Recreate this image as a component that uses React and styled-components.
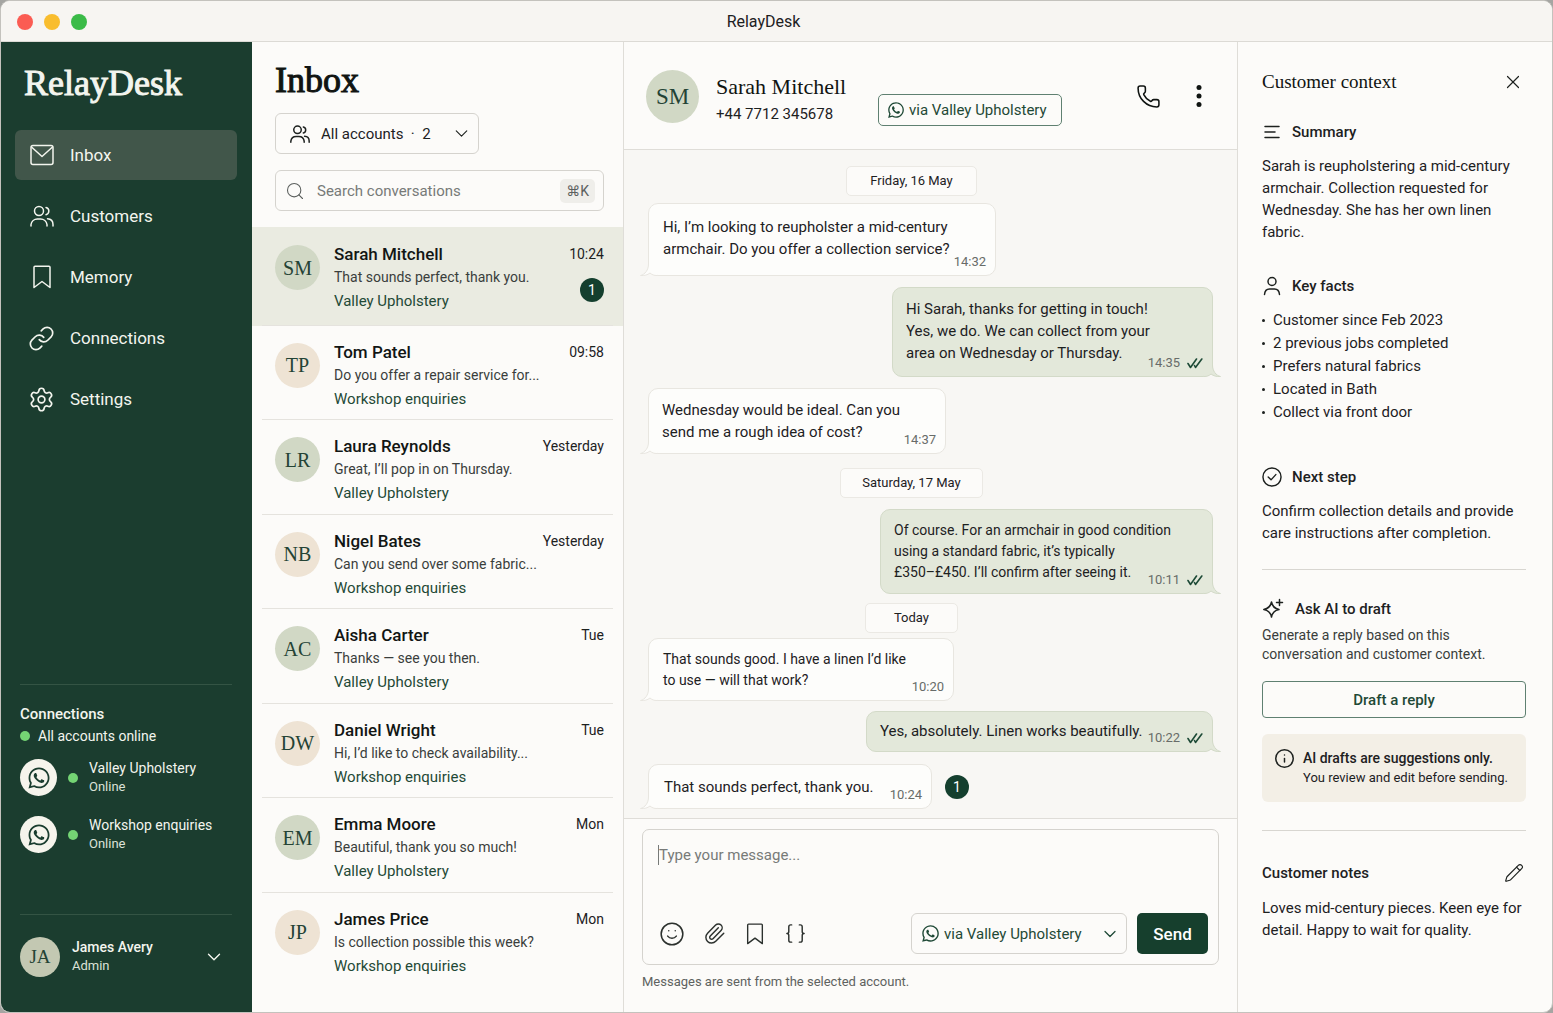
import styled, { createGlobalStyle } from "styled-components";
import { FaWhatsapp } from "react-icons/fa";
import {
  Braces,
  ChevronDown,
  Info,
  Link,
  Paperclip,
  Pencil,
  Phone,
  Search,
  Settings,
  Smile,
  X,
} from "lucide-react";

const nav = [
  { label: "Inbox", icon: MailIcon, size: 24, active: true },
  { label: "Customers", icon: PeopleIcon, size: 24 },
  { label: "Memory", icon: BookmarkIcon, size: 24 },
  { label: "Connections", icon: Link, size: 27 },
  { label: "Settings", icon: Settings, size: 27 },
];

const accounts = ["Valley Upholstery", "Workshop enquiries"];

const conversations = [
  { initials: "SM", name: "Sarah Mitchell", time: "10:24", preview: "That sounds perfect, thank you.", account: 0, unread: 1 },
  { initials: "TP", name: "Tom Patel", time: "09:58", preview: "Do you offer a repair service for...", account: 1 },
  { initials: "LR", name: "Laura Reynolds", time: "Yesterday", preview: "Great, I’ll pop in on Thursday.", account: 0 },
  { initials: "NB", name: "Nigel Bates", time: "Yesterday", preview: "Can you send over some fabric...", account: 1 },
  { initials: "AC", name: "Aisha Carter", time: "Tue", preview: "Thanks — see you then.", account: 0 },
  { initials: "DW", name: "Daniel Wright", time: "Tue", preview: "Hi, I’d like to check availability...", account: 1 },
  { initials: "EM", name: "Emma Moore", time: "Mon", preview: "Beautiful, thank you so much!", account: 0 },
  { initials: "JP", name: "James Price", time: "Mon", preview: "Is collection possible this week?", account: 1 },
];

const thread = [
  { day: "Friday, 16 May", gap: 0, width: 131 },
  { text: "Hi, I’m looking to reupholster a mid-century\narmchair. Do you offer a collection service?", time: "14:32", gap: 7, width: 348, pad: "12px 14px 15px", line: 22 },
  { sent: true, text: "Hi Sarah, thanks for getting in touch!\nYes, we do. We can collect from your\narea on Wednesday or Thursday.", time: "14:35", gap: 11, width: 321, pad: "10px 13px 12px", line: 22 },
  { text: "Wednesday would be ideal. Can you\nsend me a rough idea of cost?", time: "14:37", gap: 11, width: 298, pad: "10px 13px", line: 22 },
  { day: "Saturday, 17 May", gap: 14, width: 143 },
  { sent: true, small: true, text: "Of course. For an armchair in good condition\nusing a standard fabric, it’s typically\n£350–£450. I’ll confirm after seeing it.", time: "10:11", gap: 11, width: 333, pad: "10px 13px", line: 21 },
  { day: "Today", gap: 9, width: 93 },
  { small: true, text: "That sounds good. I have a linen I’d like\nto use — will that work?", time: "10:20", gap: 5, width: 306, pad: "10px 14px 9px", line: 21 },
  { sent: true, text: "Yes, absolutely. Linen works beautifully.", time: "10:22", gap: 10, width: 347, pad: "9px 13px", line: 21 },
  { text: "That sounds perfect, thank you.", time: "10:24", gap: 12, width: 284, pad: "12px 15px 10px", line: 21, unread: 1 },
];

const facts = [
  "Customer since Feb 2023",
  "2 previous jobs completed",
  "Prefers natural fabrics",
  "Located in Bath",
  "Collect via front door",
];

function MailIcon({ size = 24, strokeWidth = 1.5 }) {
  return (
    <svg width={size} height={size} viewBox="0 0 24 24" fill="none" stroke="currentColor" strokeWidth={strokeWidth} strokeLinejoin="round">
      <rect x="1" y="2.500" width="22" height="19" rx="2" />
      <path d="M1.500 4 L12 13.500 L22.500 4" />
    </svg>
  );
}

function PeopleIcon({ size = 24, strokeWidth = 1.5 }) {
  return (
    <svg width={size} height={size} viewBox="0 0 24 24" fill="none" stroke="currentColor" strokeWidth={strokeWidth} strokeLinecap="round">
      <circle cx="9" cy="7" r="4.5" />
      <path d="M1 22v-1.500a6.500 6.500 0 0 1 6.500-5.500h3a6.500 6.500 0 0 1 6.500 5.500V22" />
      <path d="M16 3.500a3.700 3.700 0 0 1 0 7.200" />
      <path d="M17.500 14.800c3.300.2 5.500 2.400 5.500 5.700V22" />
    </svg>
  );
}

function BookmarkIcon({ size = 24, strokeWidth = 1.5 }) {
  return (
    <svg width={size} height={size} viewBox="0 0 24 24" fill="none" stroke="currentColor" strokeWidth={strokeWidth} strokeLinejoin="round">
      <path d="M5 1.200h14a1 1 0 0 1 1 1v20.300l-8-6-8 6V2.200a1 1 0 0 1 1-1Z" />
    </svg>
  );
}

function CheckIcon() {
  return (
    <svg width="20" height="20" viewBox="0 0 21 21" fill="none" stroke="currentColor" strokeWidth="1.5" strokeLinecap="round" strokeLinejoin="round">
      <circle cx="10.500" cy="10.500" r="9.500" />
      <path d="M6.500 10.500l3 3 5-5.500" />
    </svg>
  );
}

function PersonIcon() {
  return (
    <svg width="20" height="20" viewBox="0 0 20 20" fill="none" stroke="currentColor" strokeWidth="1.5" strokeLinecap="round">
      <circle cx="10" cy="5.500" r="4" />
      <path d="M2.500 18.500c.3-3.600 2.200-5.500 5-5.500h5c2.800 0 4.700 1.900 5 5.500" />
    </svg>
  );
}

function LinesIcon() {
  return (
    <svg width="20" height="20" viewBox="0 0 20 20" fill="none" stroke="currentColor" strokeWidth="1.5" strokeLinecap="round">
      <path d="M3 4.500h14M3 10h10M3 15.500h14" />
    </svg>
  );
}

function SparkleIcon() {
  return (
    <svg width="22" height="22" viewBox="0 0 22 22" fill="none" stroke="currentColor" strokeWidth="1.5" strokeLinecap="round" strokeLinejoin="round">
      <path d="M9.500 4c.9 4.600 2.700 6.600 7.500 7.500-4.800.9-6.600 2.900-7.500 7.500-.9-4.600-2.900-6.600-7.700-7.500C6.600 10.600 8.600 8.600 9.500 4Z" />
      <path d="M17.500 1.500v6M14.500 4.500h6" />
    </svg>
  );
}

function DotsIcon() {
  return (
    <svg width="24" height="24" viewBox="0 0 24 24" fill="currentColor">
      <circle cx="12" cy="3.500" r="2.500" />
      <circle cx="12" cy="12" r="2.500" />
      <circle cx="12" cy="20.500" r="2.500" />
    </svg>
  );
}

function ReadIcon() {
  return (
    <svg width="16" height="12" viewBox="0 0 16 12" fill="none" stroke="#1d4a36" strokeWidth="1.600" strokeLinecap="round" strokeLinejoin="round">
      <path d="M1 6.500l2.500 4L9.500 2M7.500 8.500l1 2L14.800 2" />
    </svg>
  );
}

function Tail({ sent }) {
  return (
    <TailSvg $sent={sent} viewBox="0 0 18 12" fill={sent ? "#e3e8da" : "#fdfdfb"} stroke={sent ? "#d3dac8" : "#e8e6e0"}>
      <path stroke="none" d="M8.500 0C8.500 6 5 10.500.5 11.500c4 .3 7-.5 9.500-2.500 2 1.800 4 2.500 7 2.500L18 0Z" />
      <path d="M8.500 0C8.500 6 5 10.500.5 11.500c4 .3 7-.5 9.500-2.500 2 1.800 4 2.500 7 2.500" fill="none" />
    </TailSvg>
  );
}

export default function App() {
  return (
    <>
      <GlobalStyle />
      <Window>
        <TitleBar>
          <Lights>
            <Light $color="#fb5c53" />
            <Light $color="#f9bd2e" />
            <Light $color="#3bbb48" />
          </Lights>
          <WindowTitle>RelayDesk</WindowTitle>
        </TitleBar>
        <Sidebar />
        <Inbox />
        <Chat />
        <Context />
      </Window>
    </>
  );
}

function Sidebar() {
  return (
    <SidePanel>
      <Brand>RelayDesk</Brand>
      <Nav>
        {nav.map(({ label, icon: Icon, size, active }) => (
          <NavLink key={label} href="#" $active={active}>
            <NavIcon>
              <Icon size={size} strokeWidth={1.5} />
            </NavIcon>
            {label}
          </NavLink>
        ))}
      </Nav>
      <Status>
        <StatusTitle>Connections</StatusTitle>
        <StatusLine>
          <Dot />
          All accounts online
        </StatusLine>
        {accounts.map((name) => (
          <Account key={name}>
            <AccountLogo>
              <FaWhatsapp size={24} />
            </AccountLogo>
            <Dot />
            <SideText>
              {name}
              <small>Online</small>
            </SideText>
          </Account>
        ))}
      </Status>
      <Profile type="button">
        <Avatar $size={40} $font={19} $color="#c3c8b2">
          JA
        </Avatar>
        <SideText $strong>
          James Avery
          <small>Admin</small>
        </SideText>
        <ChevronDown size={22} strokeWidth={1.5} />
      </Profile>
    </SidePanel>
  );
}

function Inbox() {
  return (
    <InboxPanel>
      <InboxTop>
        <InboxTitle>Inbox</InboxTitle>
        <AccountFilter>
          <PeopleIcon size={20} strokeWidth={1.8} />
          <select aria-label="Account filter">
            <option>All accounts&nbsp; ·&nbsp; 2</option>
          </select>
          <ChevronDown size={21} strokeWidth={1.3} />
        </AccountFilter>
        <SearchBox>
          <Search size={20} strokeWidth={1.3} />
          <input aria-label="Search conversations" placeholder="Search conversations" />
          <kbd>⌘K</kbd>
        </SearchBox>
      </InboxTop>
      <ConversationList>
        {conversations.map((c) => (
          <ConversationItem key={c.name} $active={c.unread}>
            <ConversationButton type="button" $active={c.unread}>
              <Avatar $size={45} $font={20} $color={c.account ? "#eee3d4" : "#d1d8c5"}>
                {c.initials}
              </Avatar>
              <ConversationBody>
                <strong>{c.name}</strong>
                <span>{c.preview}</span>
                <em>{accounts[c.account]}</em>
              </ConversationBody>
              <ConversationSide>
                <time>{c.time}</time>
                {c.unread && <Unread>{c.unread}</Unread>}
              </ConversationSide>
            </ConversationButton>
          </ConversationItem>
        ))}
      </ConversationList>
    </InboxPanel>
  );
}

function Chat() {
  return (
    <ChatPanel>
      <ChatHeader>
        <Avatar $size={53} $font={23} $color="#d1d8c5">
          SM
        </Avatar>
        <Contact>
          <h2>Sarah Mitchell</h2>
          <span>+44 7712 345678</span>
        </Contact>
        <ViaBadge>
          <FaWhatsapp size={18} />
          via Valley Upholstery
        </ViaBadge>
        <HeaderActions>
          <IconButton type="button" aria-label="Call">
            <Phone size={25} strokeWidth={1.5} />
          </IconButton>
          <IconButton type="button" aria-label="More">
            <DotsIcon />
          </IconButton>
        </HeaderActions>
      </ChatHeader>
      <Thread>
        {thread.map((m) =>
          m.day ? (
            <Day key={m.day} $gap={m.gap} $width={m.width}>
              {m.day}
            </Day>
          ) : (
            <MessageRow key={m.time} $sent={m.sent} $gap={m.gap}>
              <Bubble $sent={m.sent} $small={m.small} $width={m.width} $pad={m.pad} $line={m.line}>
                {m.text}
                <Tail sent={m.sent} />
                <Meta>
                  {m.time}
                  {m.sent && <ReadIcon />}
                </Meta>
              </Bubble>
              {m.unread && <Unread>{m.unread}</Unread>}
            </MessageRow>
          )
        )}
      </Thread>
      <Composer>
        <ComposerBox>
          <Caret />
          <textarea aria-label="Message" placeholder="Type your message..." />
          <ComposerBar>
            <IconButton type="button" aria-label="Emoji">
              <Smile size={26} strokeWidth={1.4} />
            </IconButton>
            <IconButton type="button" aria-label="Attach file">
              <Paperclip size={23} strokeWidth={1.5} />
            </IconButton>
            <IconButton type="button" aria-label="Saved replies">
              <BookmarkIcon size={22} strokeWidth={1.5} />
            </IconButton>
            <IconButton type="button" aria-label="Insert variable">
              <Braces size={23} strokeWidth={1.5} />
            </IconButton>
            <SendFrom>
              <FaWhatsapp size={19} />
              <select aria-label="Send from">
                <option>via Valley Upholstery</option>
              </select>
              <ChevronDown size={20} strokeWidth={1.5} />
            </SendFrom>
            <SendButton type="button">Send</SendButton>
          </ComposerBar>
        </ComposerBox>
        <ComposerNote>Messages are sent from the selected account.</ComposerNote>
      </Composer>
    </ChatPanel>
  );
}

function Context() {
  return (
    <ContextPanel>
      <ContextHeader>
        <h2>Customer context</h2>
        <IconButton type="button" aria-label="Close">
          <X size={22} strokeWidth={1.3} />
        </IconButton>
      </ContextHeader>
      <ContextSection $space={32}>
        <ContextTitle>
          <LinesIcon />
          Summary
        </ContextTitle>
        <p>Sarah is reupholstering a mid-century armchair. Collection requested for Wednesday. She has her own linen fabric.</p>
      </ContextSection>
      <ContextSection $space={42}>
        <ContextTitle>
          <PersonIcon />
          Key facts
        </ContextTitle>
        <FactList>
          {facts.map((fact) => (
            <li key={fact}>{fact}</li>
          ))}
        </FactList>
      </ContextSection>
      <ContextSection $space={25}>
        <ContextTitle>
          <CheckIcon />
          Next step
        </ContextTitle>
        <p>Confirm collection details and provide care instructions after completion.</p>
      </ContextSection>
      <Divider />
      <AskTitle>
        <SparkleIcon />
        Ask AI to draft
      </AskTitle>
      <AskText>Generate a reply based on this conversation and customer context.</AskText>
      <DraftButton type="button">Draft a reply</DraftButton>
      <Notice>
        <Info size={21} strokeWidth={1.7} />
        <div>
          <strong>AI drafts are suggestions only.</strong>
          <span>You review and edit before sending.</span>
        </div>
      </Notice>
      <Divider />
      <ContextSection $space={0}>
        <NotesHeader>
          <h3>Customer notes</h3>
          <IconButton type="button" aria-label="Edit notes">
            <Pencil size={20} strokeWidth={1.4} />
          </IconButton>
        </NotesHeader>
        <p>Loves mid-century pieces. Keen eye for detail. Happy to wait for quality.</p>
      </ContextSection>
    </ContextPanel>
  );
}

const serif = `"Liberation Serif", "Times New Roman", serif`;

const GlobalStyle = createGlobalStyle`
  * {
    box-sizing: border-box;
  }

  body {
    margin: 0;
    background: #a5a5a2;
    color: #1d211f;
    font: 400 15px/22px Roboto, "DejaVu Sans", sans-serif;
  }

  button, input, select, textarea {
    font: inherit;
    color: inherit;
  }

  button {
    cursor: pointer;
  }

  svg {
    flex: none;
  }

  h1, h2, h3, p, ul {
    margin: 0;
    padding: 0;
  }
`;

const Window = styled.div`
  display: grid;
  grid-template-columns: 251px 372px minmax(560px, 1fr) 315px;
  grid-template-rows: 41px 1fr;
  min-height: 100vh;
  overflow: hidden;
  border: 1px solid #c4c2bd;
  border-radius: 10px;
  background: #fcfbf9;
`;

const TitleBar = styled.header`
  grid-column: 1 / -1;
  display: grid;
  grid-template-columns: 1fr auto 1fr;
  align-items: center;
  padding: 2px 16px 0;
  background: #f7f5f2;
  border-bottom: 1px solid #dcdad5;
`;

const Lights = styled.div`
  display: flex;
  gap: 11px;
`;

const Light = styled.span`
  width: 16px;
  height: 16px;
  border-radius: 50%;
  background: ${(p) => p.$color};
`;

const WindowTitle = styled.span`
  margin-right: 26px;
  font-size: 16px;
`;

const Avatar = styled.span`
  display: flex;
  flex: none;
  align-items: center;
  justify-content: center;
  width: ${(p) => p.$size}px;
  height: ${(p) => p.$size}px;
  border-radius: 50%;
  background: ${(p) => p.$color};
  color: #244335;
  font-family: ${serif};
  font-size: ${(p) => p.$font}px;
`;

const Dot = styled.span`
  flex: none;
  width: 10px;
  height: 10px;
  border-radius: 50%;
  background: #74d474;
`;

const Unread = styled.span`
  display: flex;
  flex: none;
  align-items: center;
  justify-content: center;
  width: 24px;
  height: 24px;
  border-radius: 50%;
  background: #143f2e;
  color: #fff;
  font-size: 14px;
`;

const IconButton = styled.button`
  display: flex;
  padding: 0;
  border: 0;
  background: none;
`;

const SidePanel = styled.aside`
  display: flex;
  flex-direction: column;
  background: #1b3d2f;
  color: #f3f5ee;
`;

const Brand = styled.div`
  padding: 20px 23px 0;
  font-family: ${serif};
  font-size: 36px;
  line-height: 42px;
  -webkit-text-stroke: 1px currentColor;
`;

const Nav = styled.nav`
  display: flex;
  flex-direction: column;
  gap: 11px;
  padding: 26px 15px 0 14px;
`;

const NavLink = styled.a`
  display: flex;
  align-items: center;
  gap: 15px;
  height: 50px;
  padding: 0 13px;
  border-radius: 6px;
  background: ${(p) => (p.$active ? "#41564a" : "none")};
  color: inherit;
  font-size: 17px;
  text-decoration: none;
`;

const NavIcon = styled.span`
  display: flex;
  justify-content: center;
  width: 27px;
`;

const Status = styled.section`
  margin: auto 20px 0 19px;
  padding: 18px 0 41px;
  border-top: 1px solid #345444;
`;

const StatusTitle = styled.h3`
  font-size: 15px;
  font-weight: 500;
`;

const StatusLine = styled.div`
  display: flex;
  align-items: center;
  gap: 8px;
  margin-bottom: 12px;
  font-size: 14px;
`;

const Account = styled.div`
  display: flex;
  align-items: center;
  gap: 11px;
  height: 37px;
  margin-bottom: 20px;
`;

const AccountLogo = styled.span`
  display: flex;
  align-items: center;
  justify-content: center;
  width: 37px;
  height: 37px;
  border-radius: 50%;
  background: #f6f4ec;
  color: #1b3d2f;
`;

const SideText = styled.span`
  display: flex;
  flex: 1;
  flex-direction: column;
  font-size: 14px;
  font-weight: ${(p) => (p.$strong ? 500 : 400)};
  line-height: 19px;

  small {
    font-size: 13px;
    font-weight: 400;
    line-height: 18px;
    color: #dbe2d8;
  }
`;

const Profile = styled.button`
  display: flex;
  align-items: center;
  gap: 12px;
  height: 98px;
  margin: 0 20px 0 19px;
  padding: 0 7px 14px 0;
  border: 0;
  border-top: 1px solid #345444;
  background: none;
  text-align: left;
`;

const InboxPanel = styled.section`
  display: flex;
  flex-direction: column;
  border-right: 1px solid #dfddd8;
`;

const InboxTop = styled.div`
  padding: 17px 19px 16px 23px;
`;

const InboxTitle = styled.h1`
  font-family: ${serif};
  font-size: 36px;
  font-weight: 400;
  line-height: 42px;
  color: #101412;
  -webkit-text-stroke: 1px currentColor;
`;

const Field = styled.label`
  display: flex;
  align-items: center;
  height: 41px;
  border: 1px solid #d5d3ce;
  border-radius: 6px;

  select,
  input {
    flex: 1;
    min-width: 0;
    padding: 0;
    border: 0;
    outline: 0;
    background: none;
    appearance: none;
  }
`;

const AccountFilter = styled(Field)`
  width: 204px;
  margin-top: 12px;
  padding: 0 6px 0 14px;
  gap: 11px;
`;

const SearchBox = styled(Field)`
  margin-top: 16px;
  padding: 0 8px 0 9px;
  gap: 12px;
  color: #5c605e;

  input::placeholder {
    color: #777a78;
  }

  kbd {
    padding: 1px 6px;
    border-radius: 5px;
    background: #efeeea;
    font: inherit;
    font-size: 14px;
  }
`;

const ConversationList = styled.ul`
  display: flex;
  flex: 1;
  flex-direction: column;
  padding-bottom: 25px;
  list-style: none;
`;

const ConversationItem = styled.li`
  display: flex;
  flex: 1 1 auto;
  padding: 0 10px;
  background: ${(p) => (p.$active ? "#eaebe1" : "none")};

  &:last-child > button {
    border-bottom-color: transparent;
  }
`;

const ConversationButton = styled.button`
  display: flex;
  flex: 1;
  align-items: flex-start;
  gap: 14px;
  min-width: 0;
  padding: ${(p) => (p.$active ? "15px 9px 11px 13px" : "14px 9px 8px 13px")};
  border: 0;
  border-bottom: 1px solid #e5e3de;
  background: none;
  text-align: left;

  > span:first-child {
    margin-top: 3px;
  }
`;

const ConversationBody = styled.span`
  display: flex;
  flex: 1;
  flex-direction: column;
  min-width: 0;
  line-height: 23px;
  white-space: nowrap;

  strong {
    font-size: 17px;
    font-weight: 500;
    line-height: 24px;
    color: #121614;
  }

  span {
    font-size: 14px;
    color: #3a3e3c;
  }

  em {
    font-size: 15px;
    font-style: normal;
    line-height: 24px;
    color: #1f4936;
  }
`;

const ConversationSide = styled.span`
  display: flex;
  flex-direction: column;
  align-items: flex-end;
  gap: 12px;
  width: 0;
  font-size: 14px;
  line-height: 24px;
  white-space: nowrap;
`;

const ChatPanel = styled.main`
  display: flex;
  flex-direction: column;
  min-width: 0;
`;

const ChatHeader = styled.header`
  display: flex;
  align-items: center;
  height: 108px;
  padding: 2px 26px 0 22px;
  border-bottom: 1px solid #dfddd8;
`;

const Contact = styled.div`
  display: flex;
  flex-direction: column;
  width: 162px;
  margin-left: 17px;
  padding-top: 6px;
  line-height: 26px;
  white-space: nowrap;

  h2 {
    font-family: ${serif};
    font-size: 22px;
    font-weight: 400;
    line-height: 28px;
    color: #101412;
  }
`;

const ViaBadge = styled.span`
  display: flex;
  align-items: center;
  gap: 4px;
  height: 32px;
  margin-top: 26px;
  padding: 0 14px 0 8px;
  border: 1px solid #5f8071;
  border-radius: 5px;
  color: #1f4936;
  white-space: nowrap;
`;

const HeaderActions = styled.div`
  display: flex;
  gap: 26px;
  margin-left: auto;
  color: #101412;
`;

const Thread = styled.div`
  display: flex;
  flex: 1;
  flex-direction: column;
  padding: 16px 24px 8px;
  background: #f8f7f4;
`;

const Day = styled.div`
  display: flex;
  align-items: center;
  justify-content: center;
  align-self: center;
  width: ${(p) => p.$width}px;
  height: 30px;
  margin: ${(p) => p.$gap}px 38px 0 0;
  border: 1px solid #ebe9e4;
  border-radius: 5px;
  background: #fcfbf9;
  font-size: 13px;
`;

const MessageRow = styled.div`
  display: flex;
  align-items: center;
  justify-content: ${(p) => (p.$sent ? "flex-end" : "flex-start")};
  gap: 13px;
  margin-top: ${(p) => p.$gap}px;
`;

const Bubble = styled.div`
  position: relative;
  width: ${(p) => p.$width}px;
  padding: ${(p) => p.$pad};
  border: 1px solid ${(p) => (p.$sent ? "#d3dac8" : "#e8e6e0")};
  border-radius: 10px;
  background: ${(p) => (p.$sent ? "#e3e8da" : "#fdfdfb")};
  font-size: ${(p) => (p.$small ? 14 : 15)}px;
  line-height: ${(p) => p.$line}px;
  white-space: pre;
`;

const TailSvg = styled.svg`
  position: absolute;
  bottom: -1px;
  width: 18px;
  height: 12px;
  ${(p) => (p.$sent ? "right: -9px; transform: scaleX(-1);" : "left: -9px;")}
`;

const Meta = styled.span`
  position: absolute;
  right: 9px;
  bottom: 5px;
  display: flex;
  align-items: center;
  gap: 7px;
  font-size: 13px;
  line-height: 16px;
  color: #686c69;
`;

const Composer = styled.footer`
  padding: 10px 18px 19px;
  border-top: 1px solid #dfddd8;
`;

const ComposerBox = styled.div`
  position: relative;
  display: flex;
  flex-direction: column;
  height: 136px;
  padding: 14px 10px 10px 16px;
  border: 1px solid #d5d3ce;
  border-radius: 7px;

  textarea {
    flex: 1;
    padding: 0;
    border: 0;
    outline: 0;
    resize: none;
    background: none;
  }

  textarea::placeholder {
    color: #777a78;
  }
`;

const Caret = styled.span`
  position: absolute;
  top: 15px;
  left: 15px;
  width: 1px;
  height: 20px;
  background: #777a78;
`;

const ComposerBar = styled.div`
  display: flex;
  align-items: center;
  gap: 18px;
  color: #2c312e;
`;

const SendFrom = styled(Field)`
  width: 216px;
  height: 41px;
  margin-left: auto;
  padding: 0 6px 0 9px;
  gap: 4px;
  color: #1f4936;
`;

const SendButton = styled.button`
  width: 71px;
  height: 41px;
  margin-left: -8px;
  border: 0;
  border-radius: 5px;
  background: #163f2d;
  color: #fff;
  font-size: 17px;
  font-weight: 500;
`;

const ComposerNote = styled.p`
  margin-top: 6px;
  font-size: 13px;
  color: #5e6260;
`;

const ContextPanel = styled.aside`
  padding: 28px 26px 24px 24px;
  border-left: 1px solid #dfddd8;
`;

const ContextHeader = styled.div`
  display: flex;
  align-items: center;
  justify-content: space-between;
  height: 24px;
  margin-bottom: 27px;
  padding-right: 2px;

  h2 {
    font-family: ${serif};
    font-size: 19px;
    font-weight: 400;
    color: #101412;
  }
`;

const ContextSection = styled.section`
  margin-bottom: ${(p) => p.$space}px;
`;

const ContextTitle = styled.h3`
  display: flex;
  align-items: center;
  gap: 10px;
  height: 22px;
  margin-bottom: 12px;
  font-size: 15px;
  font-weight: 500;
`;

const FactList = styled.ul`
  list-style: none;
  line-height: 23px;

  li {
    display: flex;
    align-items: center;
    gap: 8px;
  }

  li::before {
    content: "";
    width: 3px;
    height: 3px;
    border-radius: 50%;
    background: currentColor;
  }
`;

const Divider = styled.hr`
  height: 1px;
  margin: 0;
  border: 0;
  background: #d8d6d1;
`;

const AskTitle = styled(ContextTitle)`
  gap: 11px;
  margin: 28px 0 6px;
`;

const AskText = styled.p`
  font-size: 14px;
  line-height: 19px;
  color: #3a3e3c;
`;

const DraftButton = styled.button`
  width: 100%;
  height: 37px;
  margin: 17px 0 16px;
  border: 1px solid #5f8071;
  border-radius: 4px;
  background: none;
  color: #1f4936;
  font-weight: 500;
`;

const Notice = styled.div`
  display: flex;
  gap: 8px;
  height: 68px;
  margin-bottom: 28px;
  padding: 14px 12px;
  border-radius: 6px;
  background: #f3efe6;
  white-space: nowrap;

  strong,
  span {
    display: block;
    font-size: 14px;
    font-weight: 500;
    line-height: 20px;
  }

  span {
    font-size: 13px;
    font-weight: 400;
  }
`;

const NotesHeader = styled.div`
  display: flex;
  align-items: center;
  justify-content: space-between;
  height: 24px;
  margin: 30px 0 12px;
  padding-right: 2px;

  h3 {
    font-size: 15px;
    font-weight: 500;
  }
`;
